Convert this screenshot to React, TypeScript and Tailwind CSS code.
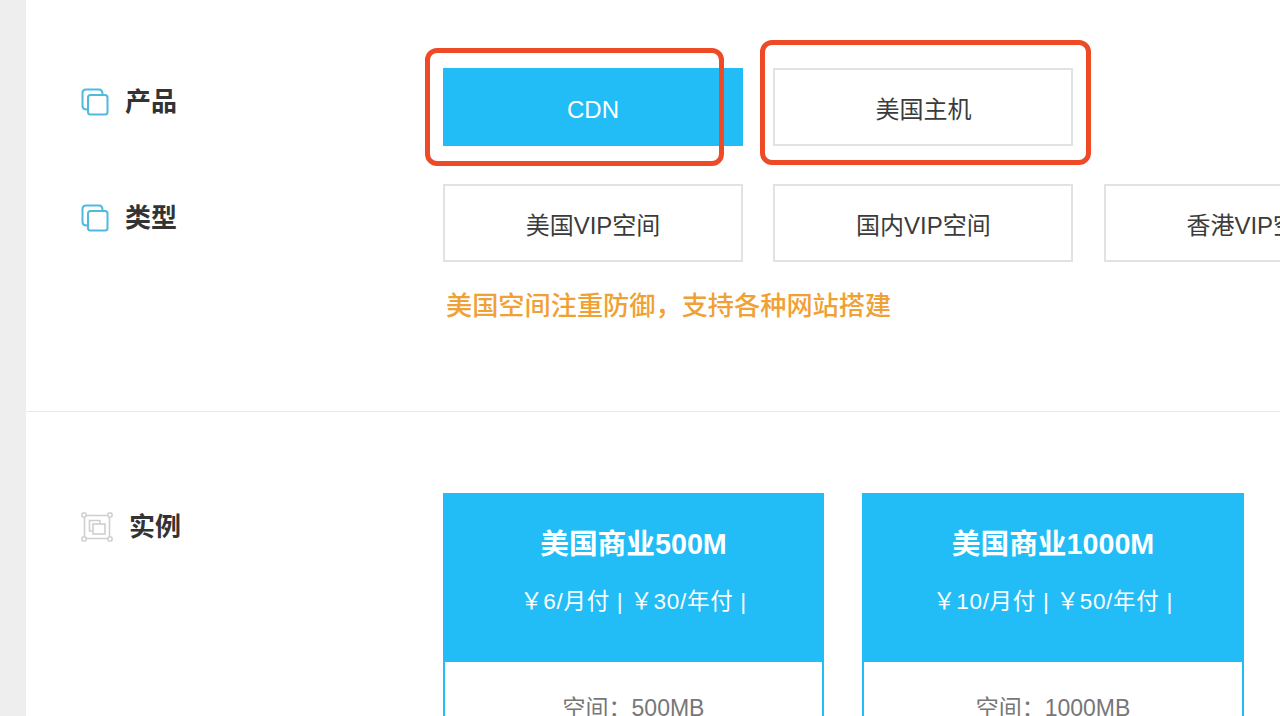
import React from 'react';

const fontStack = "font-['Liberation_Sans','Noto_Sans_CJK_SC',sans-serif]";

const LayersIcon: React.FC = () => (
  <svg width="28" height="28" viewBox="0 0 28 28" fill="none" stroke="#4fb9de" strokeWidth="2" className="shrink-0">
    <path d="M6 21.5 C3 21.5 1.5 20 1.5 18 V5 C1.5 3 3 1.5 5 1.5 H18 C20 1.5 21.5 3 21.5 6" />
    <rect x="7" y="7" width="19.5" height="19.5" rx="2.5" />
  </svg>
);

const InstanceIcon: React.FC = () => (
  <svg width="32" height="30" viewBox="0 0 32 30" fill="none" stroke="#cfcfcf" strokeWidth="1.6" className="shrink-0">
    <path d="M5 3.5 H27 M5 26.5 H27 M3.5 5 V25 M28.5 5 V25" />
    <rect x="1" y="1" width="4" height="4" rx="1" />
    <rect x="27" y="1" width="4" height="4" rx="1" />
    <rect x="1" y="25" width="4" height="4" rx="1" />
    <rect x="27" y="25" width="4" height="4" rx="1" />
    <path d="M12 19 H8.5 V8.5 H19 V12" />
    <rect x="12" y="12" width="12" height="10" />
  </svg>
);

const Option: React.FC<{ label: string; active?: boolean }> = ({ label, active }) => (
  <div
    className={`w-[300px] h-[78px] shrink-0 flex items-center justify-center pt-[5px] text-[24px] ${
      active ? 'bg-[#22bdf6] text-white' : 'bg-white border-2 border-[#e2e2e2] text-[#3b3b3b]'
    }`}
  >
    {label}
  </div>
);

const RowLabel: React.FC<{ icon: React.ReactNode; label: string; gap: string; className?: string }> = ({
  icon,
  label,
  gap,
  className,
}) => (
  <div className={`w-[362px] shrink-0 flex items-center ${gap} ${className ?? ''}`}>
    {icon}
    <span className="text-[26px] leading-[30px] font-bold text-[#333333]">{label}</span>
  </div>
);

const PlanCard: React.FC<{ title: string; price: string; space: string; width: string }> = ({
  title,
  price,
  space,
  width,
}) => (
  <div className={`${width} h-[300px] shrink-0 border-x-2 border-[#22bdf6]`}>
    <div className="-mx-[2px] h-[169px] bg-[#22bdf6] text-white text-center pt-[33px]">
      <div className="text-[28.7px] leading-[36px] font-bold">{title}</div>
      <div className="mt-[25px] text-[22.5px] leading-[30px] tracking-[0.7px]">{price}</div>
    </div>
    <div className="bg-white text-center pt-[31px] text-[23px] leading-[30px] text-[#777777]">{space}</div>
  </div>
);

const App: React.FC = () => {
  return (
    <div className={`relative flex w-[1280px] h-[716px] overflow-hidden bg-white ${fontStack}`}>
      <div className="w-[26px] shrink-0 bg-[#eeeeee]" />

      <div className="flex-1 min-w-0 overflow-hidden">
        <div className="h-[412px] pt-[68px] pl-[55px] border-b border-[#e8e8e8]">
          <div className="flex">
            <RowLabel icon={<LayersIcon />} label="产品" gap="gap-[16px]" className="h-[68px]" />
            <div className="flex gap-[30.4px]">
              <Option label="CDN" active />
              <Option label="美国主机" />
            </div>
          </div>
          <div className="flex mt-[38px]">
            <RowLabel icon={<LayersIcon />} label="类型" gap="gap-[16px]" className="h-[68px]" />
            <div>
              <div className="flex gap-[30.4px] w-[1000px]">
                <Option label="美国VIP空间" />
                <Option label="国内VIP空间" />
                <Option label="香港VIP空间" />
              </div>
              <div className="mt-[26px] pl-[3px] text-[26.2px] leading-[36px] font-medium text-[#f0a135]">
                美国空间注重防御，支持各种网站搭建
              </div>
            </div>
          </div>
        </div>

        <div className="flex pt-[81px] pl-[55px]">
          <RowLabel icon={<InstanceIcon />} label="实例" gap="gap-[16px]" className="h-[68px]" />
          <div className="flex gap-[38px]">
            <PlanCard title="美国商业500M" price="￥6/月付 | ￥30/年付 |" space="空间：500MB" width="w-[381px]" />
            <PlanCard title="美国商业1000M" price="￥10/月付 | ￥50/年付 |" space="空间：1000MB" width="w-[382px]" />
          </div>
        </div>
      </div>

      {/* red highlight boxes drawn over the options */}
      <div className="absolute left-[425px] top-[48px] w-[299px] h-[118px] border-[5px] border-[#ee4a26] rounded-[12px]" />
      <div className="absolute left-[760px] top-[40px] w-[331px] h-[125px] border-[5px] border-[#ee4a26] rounded-[12px]" />
    </div>
  );
};

export default App;
